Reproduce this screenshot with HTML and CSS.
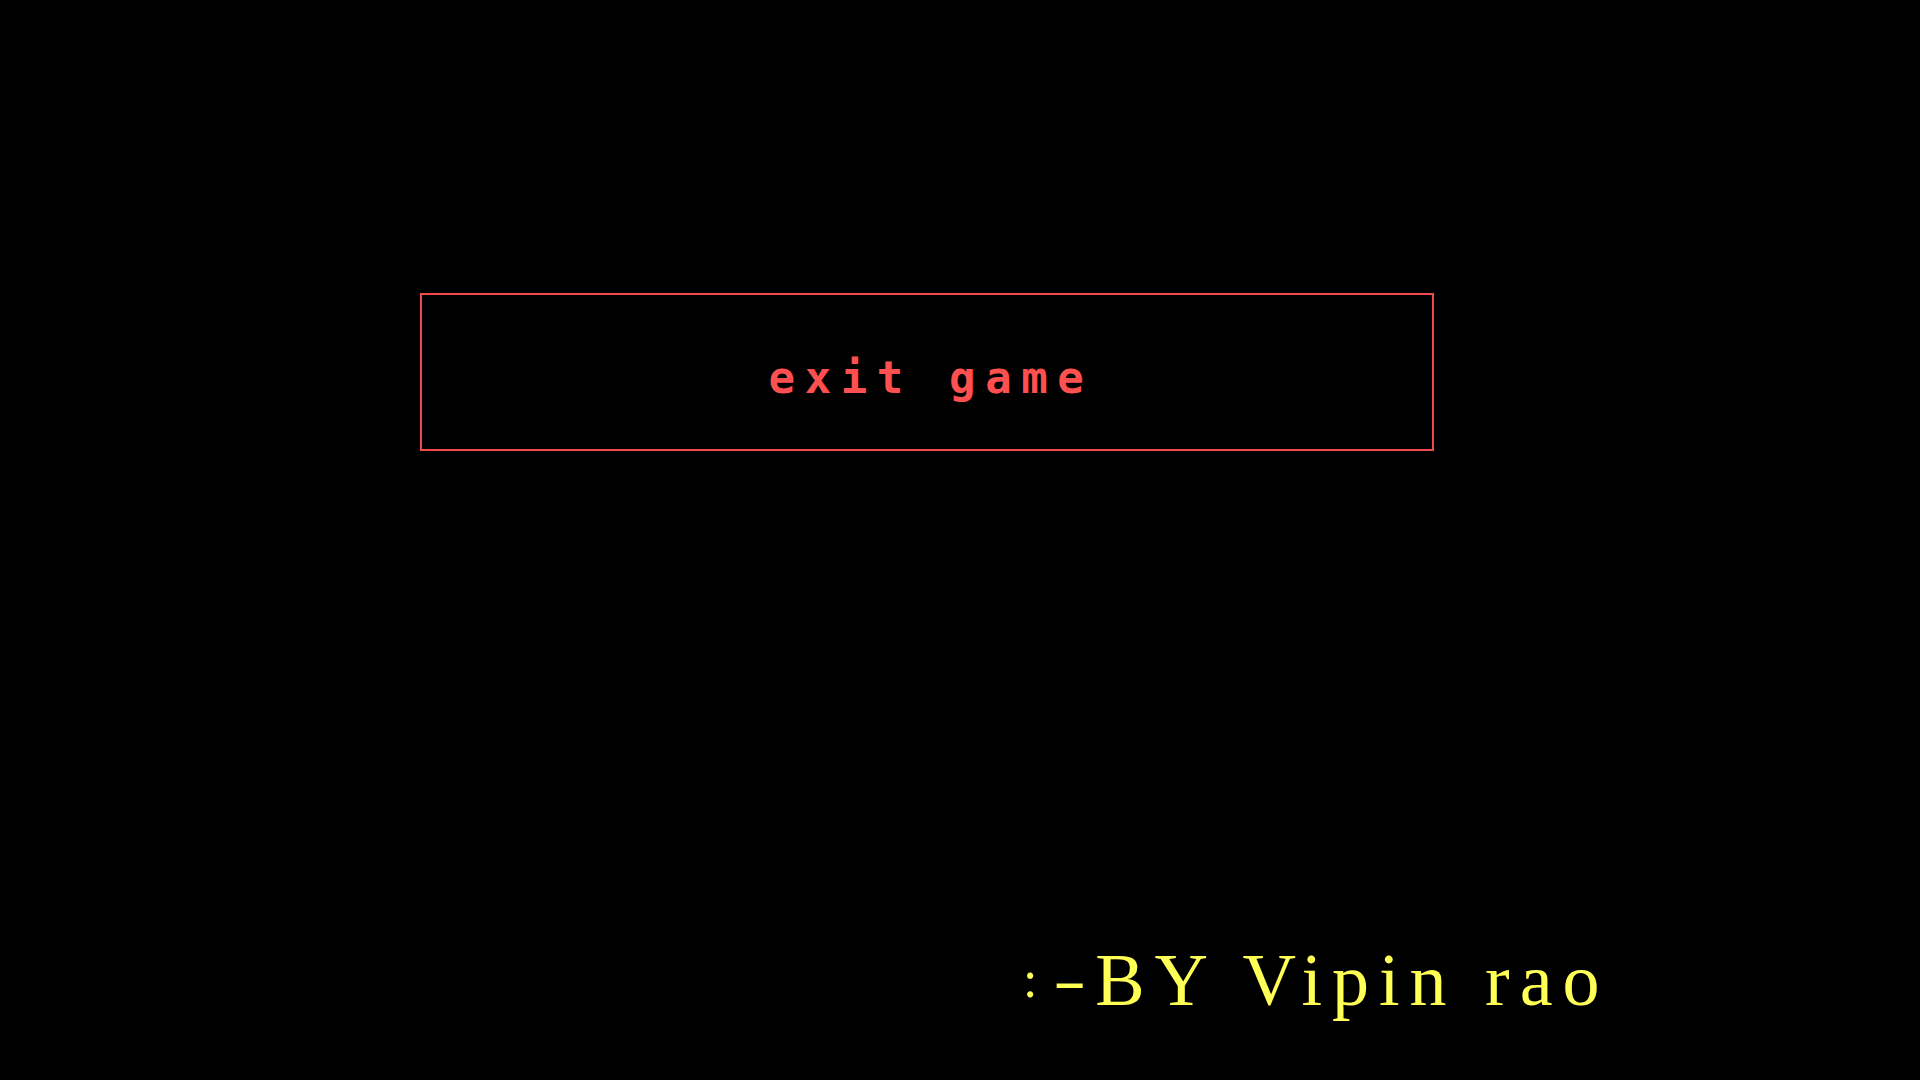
FILE: index.html
```html
<!DOCTYPE html>
<html>
<head>
<meta charset="utf-8">
<link rel="stylesheet" href="styles.css">
</head>
<body>
<main class="screen">
  <div class="menu-box">
    <span class="menu-label">exit game</span>
  </div>
  <div class="credit"><span class="colon">:</span><span class="dash">-</span>BY Vipin rao</div>
</main>
</body>
</html>
```
FILE: styles.css
```css
html, body {
  margin: 0;
  padding: 0;
  background: #000;
}
.screen {
  width: 1920px;
  height: 1080px;
  box-sizing: border-box;
  padding-top: 293px;
  display: flex;
  flex-direction: column;
  align-items: flex-start;
}
.menu-box {
  margin-left: 420px;
  width: 1014px;
  height: 158px;
  box-sizing: border-box;
  border: 2px solid #f04a4a;
  display: flex;
  align-items: center;
  justify-content: center;
  padding-top: 12px;
  padding-left: 8px;
}
.menu-label {
  font-family: "DejaVu Sans Mono", "Liberation Mono", monospace;
  font-weight: bold;
  font-size: 44px;
  letter-spacing: 9.6px;
  color: #ff5050;
  line-height: 1;
}
.credit {
  margin-left: 1020px;
  margin-top: 492px;
  font-family: "Liberation Serif", serif;
  font-size: 74px;
  line-height: 1;
  letter-spacing: 10px;
  color: #ffff55;
  white-space: pre;
}
.credit .colon {
  display: inline-block;
  transform: scale(0.7);
  letter-spacing: 0;
}
.credit .dash {
  display: inline-block;
  letter-spacing: 0;
  transform: scaleX(1.35) scaleY(0.8);
  transform-origin: left center;
  margin-left: 12px;
  margin-right: 18px;
}
```
